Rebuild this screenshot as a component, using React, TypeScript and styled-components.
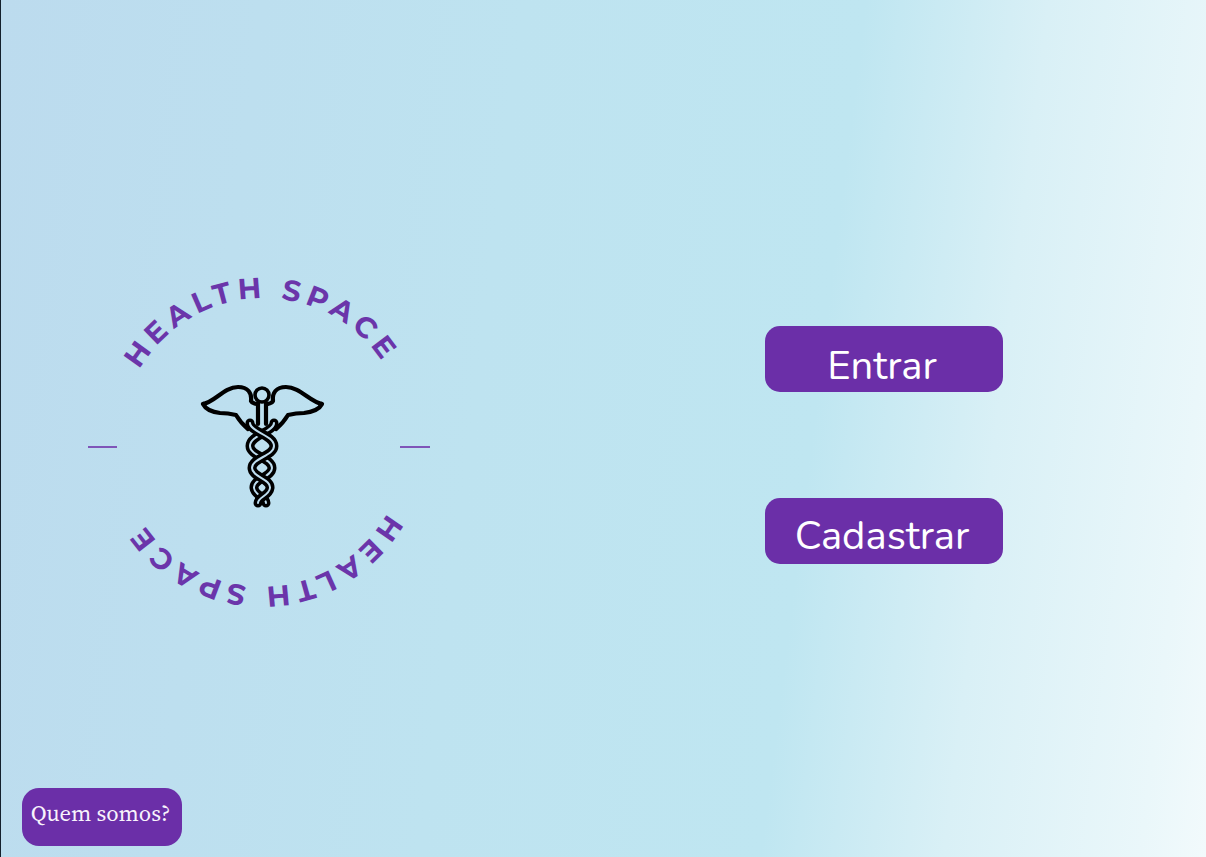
import React from "react";
import styled, { createGlobalStyle } from "styled-components";

const Global = createGlobalStyle`
  html, body { margin: 0; padding: 0; height: 100%; }
  #root { height: 100%; }
`;

const Page = styled.main`
  box-sizing: border-box;
  width: 1206px;
  height: 857px;
  overflow: hidden;
  display: flex;
  flex-direction: column;
  padding: 260px 0 11px 21px;
  border-left: 1px solid #14202c;
  background: linear-gradient(97deg, #bcdbee 0%, #bee3f0 40%, #bfe6f1 66%, #d9f0f6 80%, #eaf7fa 95%, #f2fafc 100%);
`;

const Hero = styled.section`
  display: flex;
  align-items: flex-start;
  margin-left: 48px;
`;

const LogoSvg = styled.svg`
  display: block;
  flex: none;
  width: 380px;
  height: 360px;
`;

const Actions = styled.nav`
  display: flex;
  flex-direction: column;
  gap: 106px;
  margin: 66px 0 0 315px;
`;

const ActionButton = styled.button<{ $lift: number }>`
  box-sizing: border-box;
  width: 238px;
  height: 66px;
  border: none;
  border-radius: 15px;
  background: #6b2fa8;
  color: #ffffff;
  font-family: "Nunito", "Lato", "Noto Sans", sans-serif;
  font-size: 40px;
  font-weight: 400;
  line-height: 1;
  padding: ${(p) => p.$lift}px 4px 0 0;
  text-align: center;
`;

const AboutButton = styled.button`
  box-sizing: border-box;
  margin-top: auto;
  width: 160px;
  height: 58px;
  border: none;
  border-radius: 17px;
  background: #6b2fa8;
  color: #f8f3fc;
  font-family: "Source Serif 4", "Source Serif Pro", "Noto Serif", "DejaVu Serif", serif;
  font-size: 22.5px;
  padding: 0 3px 8px 0;
  align-self: flex-start;
`;

const cx = 262;
const cy = 443.5;
const r = 143;

function arc(startDeg: number, endDeg: number) {
  const p = (d: number) => {
    const a = (d * Math.PI) / 180;
    return `${(cx + r * Math.sin(a)).toFixed(2)} ${(cy - r * Math.cos(a)).toFixed(2)}`;
  };
  return `M ${p(startDeg)} A ${r} ${r} 0 1 1 ${p(endDeg)}`;
}

const RingLabel = styled.text`
  fill: #6b35aa;
  font-family: "Montserrat", "Nunito", "Inter", sans-serif;
  font-size: 29px;
  font-weight: 700;
  letter-spacing: 5.3px;
`;

const Rule = styled.line`
  stroke: #7f55b8;
  stroke-width: 2;
`;

const Outline = styled.path`
  fill: none;
  stroke: #000;
  stroke-width: 4.2;
  stroke-linejoin: round;
  stroke-linecap: round;
`;

const SnakeBody = styled.path`
  fill: none;
  stroke: #000;
  stroke-width: 9;
  stroke-linecap: round;
`;

const SnakeInner = styled.path`
  fill: none;
  stroke: #bddcee;
  stroke-width: 2;
  stroke-linecap: round;
`;

const snakeA = "M 250 423 C 250 432 274 435 274 446 C 274 456 252 458 252 468 C 252 477 271 479 270 488 C 269 496 258 497 258 503";
const snakeB = "M 274 423 C 274 432 250 435 250 446 C 250 456 272 458 272 468 C 272 477 253 479 254 488 C 255 496 266 497 266 503";

function Caduceus() {
  return (
    <g>
      <Outline d="M 203 404 C 215 402 224 387 238 387 C 248 387 252 393 251 401 C 252 403 256 404 258 404 M 203 404 C 206 410 212 412 220 413 C 226 413 232 414 236 415 C 239 420 243 425 248 429" />
      <Outline d="M 322 404 C 310 402 300 387 286 387 C 276 387 272 393 273 401 C 272 403 268 404 266 404 M 322 404 C 319 410 312 412 304 413 C 298 413 292 414 288 415 C 285 420 281 425 276 429" />
      <Outline d="M 258 403 V 424 M 266 403 V 424" />
      <circle cx={262} cy={395} r={7} fill="none" stroke="#000" strokeWidth={3.6} />
      <SnakeBody d={snakeB} />
      <SnakeInner d={snakeB} />
      <SnakeBody d={snakeA} />
      <SnakeInner d={snakeA} />
    </g>
  );
}

export default function App() {
  return (
    <Page>
      <Global />
      <Hero>
        <LogoSvg viewBox="70 260 380 360" role="img" aria-label="Health Space">
          <defs>
            <path id="ring-top" d={arc(-59, 120)} />
            <path id="ring-bottom" d={arc(119, 300)} />
          </defs>
          <RingLabel>
            <textPath href="#ring-top">HEALTH SPACE</textPath>
          </RingLabel>
          <RingLabel>
            <textPath href="#ring-bottom">HEALTH SPACE</textPath>
          </RingLabel>
          <Rule x1={88} x2={117} y1={447} y2={447} />
          <Rule x1={400} x2={430} y1={447} y2={447} />
          <Caduceus />
        </LogoSvg>
        <Actions>
          <ActionButton $lift={13}>Entrar</ActionButton>
          <ActionButton $lift={9}>Cadastrar</ActionButton>
        </Actions>
      </Hero>
      <AboutButton>Quem somos?</AboutButton>
    </Page>
  );
}
